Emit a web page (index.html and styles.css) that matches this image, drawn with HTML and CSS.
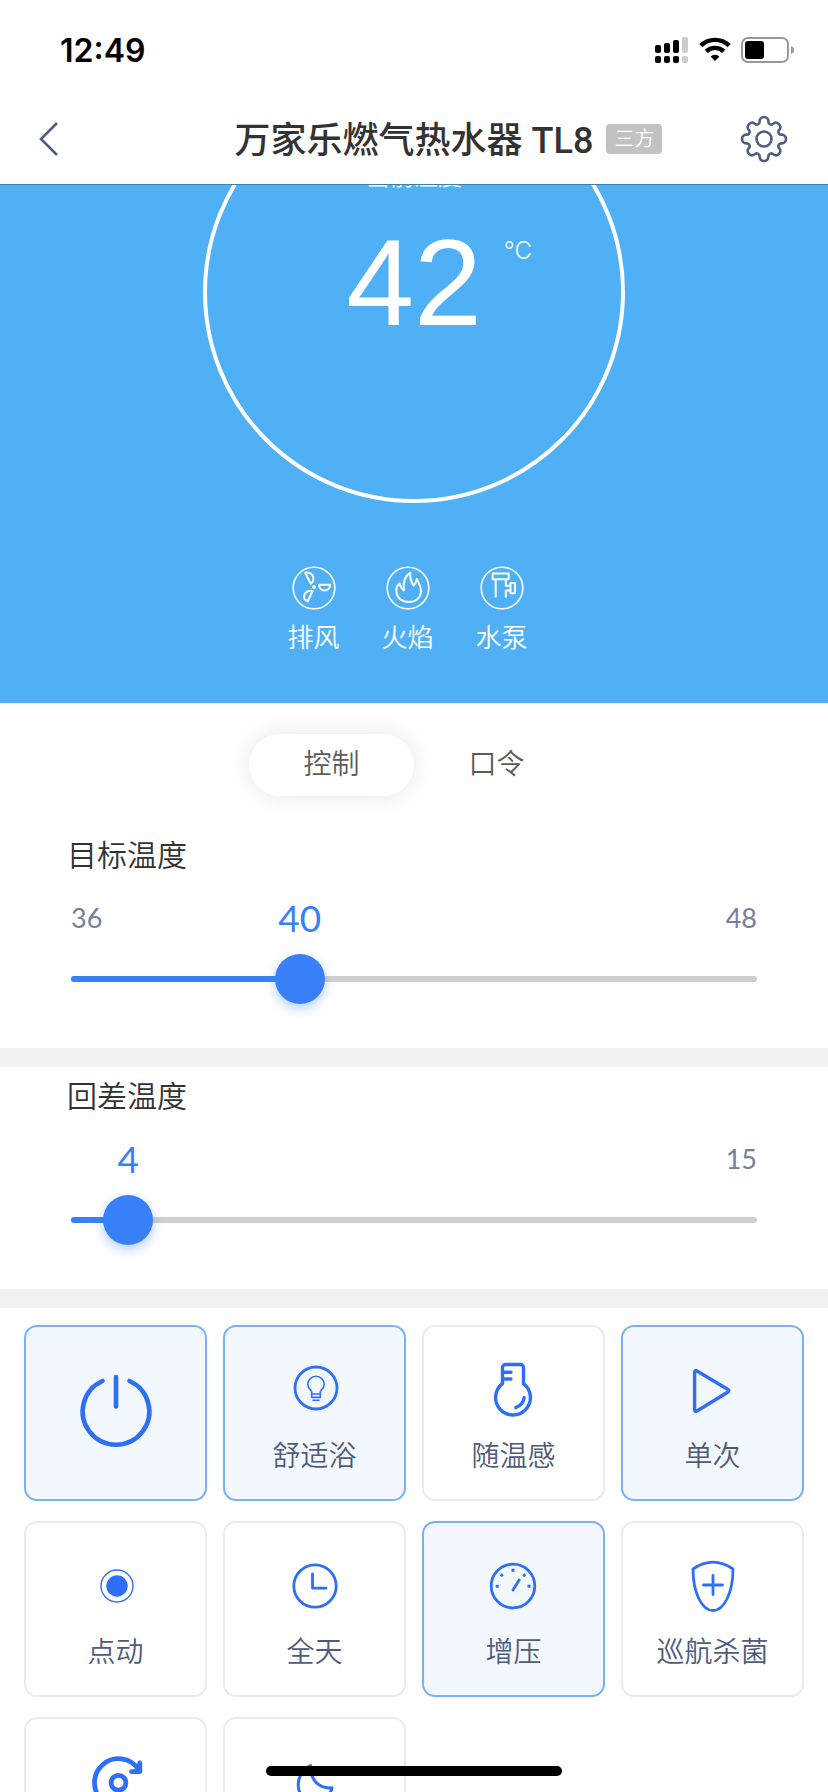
FILE: index.html
```html
<!DOCTYPE html>
<html lang="zh-CN">
<head>
  <meta charset="UTF-8">
  <meta name="viewport" content="width=device-width, initial-scale=1.0">
  <title>万家乐燃气热水器 TL8</title>
  <link rel="stylesheet" href="styles.css">
</head>
<body>
  <header class="header">
    <div class="status-bar">
      <span class="time">12:49</span>
      <div class="status-icons">
        <svg width="34" height="26" viewBox="0 0 34 26">
          <rect x="0" y="8" width="6" height="8" rx="2"/>
          <rect x="9" y="6" width="6" height="10" rx="2"/>
          <rect x="18" y="3" width="6" height="13" rx="2"/>
          <rect x="27" y="0" width="6" height="16" rx="2" fill="#ccc"/>
          <rect x="0" y="19" width="6" height="7" rx="2"/>
          <rect x="9" y="19" width="6" height="7" rx="2"/>
          <rect x="18" y="19" width="6" height="7" rx="2"/>
          <rect x="27" y="19" width="6" height="7" rx="2" fill="#ccc"/>
        </svg>
        <svg width="32" height="26" viewBox="0 0 32 26" fill="none" stroke="#000" stroke-width="4.4">
          <path d="M1.8 8.6a20.4 20.4 0 0 1 28.4 0"/>
          <path d="M7.3 14.4a12.6 12.6 0 0 1 17.4 0"/>
          <path d="M16 24l-4.4-4.6a6.6 6.6 0 0 1 8.8 0z" fill="#000" stroke="none"/>
        </svg>
        <svg width="54" height="26" viewBox="0 0 54 26">
          <rect x="1" y="1" width="46" height="24" rx="6" fill="none" stroke="#999" stroke-width="2"/>
          <rect x="4" y="4" width="19" height="18" rx="3"/>
          <path d="M50 9q3 1 3 4t-3 4z" fill="#999"/>
        </svg>
      </div>
    </div>
    <nav class="nav">
      <a href="#" class="back" aria-label="返回">
        <svg width="20" height="34" viewBox="0 0 20 34"><path d="M18 1L2 17l16 16"/></svg>
      </a>
      <h1>万家乐燃气热水器 TL8</h1>
      <div class="nav-right">
        <span class="badge">三方</span>
        <button class="settings" aria-label="设置">
          <svg width="50" height="50" viewBox="-25 -25 50 50">
            <path d="M17.6-4.4A4.4 4.4 0 0 1 17.6 4.4A2.8 2.8 0 0 0 15.5 9.4A4.4 4.4 0 0 1 9.4 15.5A2.8 2.8 0 0 0 4.4 17.6A4.4 4.4 0 0 1-4.4 17.6A2.8 2.8 0 0 0-9.4 15.5A4.4 4.4 0 0 1-15.5 9.4A2.8 2.8 0 0 0-17.6 4.4A4.4 4.4 0 0 1-17.6-4.4A2.8 2.8 0 0 0-15.5-9.4A4.4 4.4 0 0 1-9.4-15.5A2.8 2.8 0 0 0-4.4-17.6A4.4 4.4 0 0 1 4.4-17.6A2.8 2.8 0 0 0 9.4-15.5A4.4 4.4 0 0 1 15.5-9.4A2.8 2.8 0 0 0 17.6-4.4Z"/>
            <circle r="7.5"/>
          </svg>
        </button>
      </div>
    </nav>
  </header>

  <main>
    <section class="hero">
      <div class="dial">
        <div class="dial-label">当前温度</div>
        <div class="dial-value">42<span class="unit">°C</span></div>
      </div>
      <ul class="states">
        <li>
          <svg width="44" height="44" viewBox="-22 -22 44 44">
            <circle r="20.8" stroke-width="1.6"/>
            <circle cy="-1" r="2" class="solid"/>
            <path d="M5-3.3H16.3C16.3 0 13.5 2.6 10.5 2.6S5 0 5-3.3Z"/>
            <path d="M-8.8-15.2C-5-16-1.5-14-0.7-11C-0.2-8.5-1-6-3.2-4.2Z"/>
            <path d="M-1.4 3C-5 2.5-8.5 4-9.7 7C-10.6 10-9.5 12.3-6.3 13.2Z"/>
          </svg>
          <span>排风</span>
        </li>
        <li>
          <svg width="44" height="44" viewBox="-22 -22 44 44">
            <circle r="20.8" stroke-width="1.6"/>
            <path d="M2.3-15.3C-3-12-5.5-7-4 2.5C-6.5 1-7.5-1.5-8.3-4.5C-11-1.5-12-2-11.5 5C-10.5 10.5-5 14 1 14C7.5 14 12.5 10 13 4C13.3-1 11-5 8.8-9C8.5-6.5 7.3-4 5.5-2.5C3-6 1.8-10 2.3-15.3Z"/>
          </svg>
          <span>火焰</span>
        </li>
        <li>
          <svg width="44" height="44" viewBox="-22 -22 44 44">
            <circle r="20.8" stroke-width="1.6"/>
            <path d="M-9.3-14.5H6.7V-8.7H-9.3ZM-6.3-8.7V9.5M3.8-8.7V-2.3H8M3.8 9.5V2.5H8M8.5-5H13V5.3H8.5Z"/>
          </svg>
          <span>水泵</span>
        </li>
      </ul>
    </section>

    <div class="tabs">
      <button class="tab active">控制</button>
      <button class="tab">口令</button>
    </div>

    <section class="setting">
      <label for="target">目标温度</label>
      <div class="scale">
        <span>36</span>
        <output for="target" style="left: 33.33%">40</output>
        <span>48</span>
      </div>
      <div class="slider">
        <div class="track"><div class="fill" style="width: 33.33%"></div></div>
        <input type="range" id="target" min="36" max="48" value="40">
      </div>
    </section>

    <section class="setting">
      <label for="hysteresis">回差温度</label>
      <div class="scale">
        <span></span>
        <output for="hysteresis" style="left: 8.33%">4</output>
        <span>15</span>
      </div>
      <div class="slider">
        <div class="track"><div class="fill" style="width: 8.33%"></div></div>
        <input type="range" id="hysteresis" min="3" max="15" value="4">
      </div>
    </section>

    <section class="modes">
      <button class="mode power on" aria-label="电源">
        <svg viewBox="-36 -36 72 72" stroke-width="4.6">
          <path d="M-13.5-32A33.3 33.3 0 1 0 13.5-32M0-36V-6.5"/>
        </svg>
      </button>
      <button class="mode on">
        <svg viewBox="-36 -36 72 72">
          <circle cx="1" cy="-1" r="21" stroke-width="2.8"/>
          <path stroke-width="1.6" d="M-3.3 6V2.8C-3.3 1.5-7.2-0.5-7.2-4.6a8.2 8.2 0 0 1 16.4 0C9.2-0.5 5.3 1.5 5.3 2.8V8.4H-3.3V5H5.3M-2 11.2H4"/>
        </svg>
        <span>舒适浴</span>
      </button>
      <button class="mode">
        <svg viewBox="-36 -36 72 72" stroke-width="3.4">
          <path d="M-11.5-5.3V-21.5a3 3 0 0 1 3-3H6.5a3 3 0 0 1 3 3V-5.3A17.4 17.4 0 1 1-11.5-5.3ZM-11-16.7H-3M-11-10H-3M10.2 8.6Q9 16 1.8 18.6"/>
        </svg>
        <span>随温感</span>
      </button>
      <button class="mode on">
        <svg viewBox="-36 -36 72 72" stroke-width="3.4">
          <path d="M-18.4-16.6Q-18.4-19.4-16-18L14.6 0.2Q17 1.8 14.6 3.2L-16 22Q-18.4 23.4-18.4 20.6Z"/>
        </svg>
        <span>单次</span>
      </button>
      <button class="mode">
        <svg viewBox="-36 -36 72 72">
          <circle cx="1" cy="1" r="16" stroke-width="1.4"/>
          <circle cx="1" cy="1" r="10.7" class="solid"/>
        </svg>
        <span>点动</span>
      </button>
      <button class="mode">
        <svg viewBox="-36 -36 72 72" stroke-width="2.8">
          <circle cy="1" r="21.2"/>
          <path d="M-2.5-11V3.2H11"/>
        </svg>
        <span>全天</span>
      </button>
      <button class="mode on">
        <svg viewBox="-36 -36 72 72" stroke-width="2.8">
          <circle cx="-1" cy="1" r="21.8"/>
          <path d="M-1 5L5.2-5"/>
          <path class="solid" d="M-2.5-16.2h3v3h-3zM-18.3-0.2h3v3h-3zM13.5-0.2h3v3h-3zM-12.2-11.8l2 2-2 2-2-2zM10.2-11.8l2 2-2 2-2-2z"/>
        </svg>
        <span>增压</span>
      </button>
      <button class="mode">
        <svg viewBox="-36 -36 72 72" stroke-width="2.8">
          <path d="M-20-16Q-10-22.8 0-22.8T20-16C20 8 11 25.5 0 25.5S-20 8-20-16ZM-9.5 0H9.5M0-9.5V9.5"/>
        </svg>
        <span>巡航杀菌</span>
      </button>
      <button class="mode" aria-label="循环">
        <svg viewBox="-36 -36 72 72" stroke-width="4.8">
          <path d="M22.5-11.5A24 24 0 1 0 22.5 15M23.8-18V-9.3H15.5"/>
          <circle cx="2.5" cy="1.7" r="7.4"/>
        </svg>
      </button>
      <button class="mode" aria-label="夜间">
        <svg viewBox="-36 -36 72 72" stroke-width="3">
          <path d="M-4.5-15.5C-5 0 5 8 17 6.8C14 20-4 26-13 15C-20 6-17-10-4.5-15.5Z"/>
        </svg>
      </button>
    </section>
  </main>

  <div class="home-indicator"></div>

  <script>
    document.querySelectorAll('.setting').forEach(function (box) {
      const input = box.querySelector('input');
      const value = box.querySelector('output');
      const fill = box.querySelector('.fill');

      input.addEventListener('input', function () {
        const percent = (input.value - input.min) / (input.max - input.min) * 100;
        value.textContent = input.value;
        value.style.left = percent + '%';
        fill.style.width = percent + '%';
      });
    });
  </script>
</body>
</html>
```
FILE: styles.css
```css
* {
  box-sizing: border-box;
}
body {
  margin: 0;
  height: 100vh;
  display: flex;
  flex-direction: column;
  overflow: hidden;
  background: #fff;
  font-family: Roboto, "Noto Sans CJK SC", sans-serif;
  font-weight: 350;
  color: #333;
}
button {
  border: none;
  padding: 0;
  background: none;
  font-family: inherit;
  font-weight: inherit;
  cursor: pointer;
}
svg {
  display: block;
  flex: none;
  overflow: visible;
}

/* header */
.header {
  flex: none;
  border-bottom: 1px solid #3f80ab;
}
.status-bar {
  height: 96px;
  padding: 4px 33px 0 60px;
  display: flex;
  align-items: center;
  justify-content: space-between;
}
.time {
  font-family: Inter, sans-serif;
  font-size: 32px;
  font-weight: 600;
  color: #000;
}
.status-icons {
  display: flex;
  gap: 10px;
}
.nav {
  height: 88px;
  padding: 0 39px 2px;
  display: grid;
  grid-template-columns: 1fr auto 1fr;
  align-items: center;
}
.nav svg {
  fill: none;
  stroke: #4f5d80;
  stroke-width: 2.6;
}
.back {
  justify-self: start;
}
.nav h1 {
  margin: 0;
  padding-top: 4px;
  font-size: 36px;
  font-weight: 500;
  line-height: 48px;
}
.nav-right {
  display: flex;
  align-items: center;
  justify-content: space-between;
  padding-left: 13px;
}
.badge {
  padding: 0 8px;
  border-radius: 4px;
  background: #c2c2c2;
  color: #fff;
  font-size: 20px;
  line-height: 30px;
}

/* content */
main {
  flex: 1;
  overflow-y: auto;
  scrollbar-width: none;
}
.hero {
  height: 518px;
  overflow: hidden;
  background: #50b0f5;
  color: #fff;
  display: flex;
  flex-direction: column;
  align-items: center;
}
.dial {
  flex: none;
  width: 422px;
  height: 422px;
  margin-top: -104px;
  padding-top: 76px;
  border: 4px solid #fff;
  border-radius: 50%;
  text-align: center;
}
.dial-label {
  font-size: 24px;
  line-height: 32px;
}
.dial-value {
  position: relative;
  width: max-content;
  margin: 20px auto 0;
  font-family: "Liberation Sans", sans-serif;
  font-size: 122px;
  line-height: 140px;
}
.unit {
  position: absolute;
  top: 22px;
  left: 100%;
  margin-left: 22px;
  font-family: Inter, sans-serif;
  font-size: 24px;
  font-weight: 300;
  line-height: 32px;
}
.states {
  display: flex;
  margin: 63px 0 0;
  padding: 0 13px 0 0;
  list-style: none;
}
.states li {
  width: 94px;
  display: flex;
  flex-direction: column;
  align-items: center;
  gap: 8px;
  font-size: 26px;
  line-height: 40px;
}
.states svg {
  fill: none;
  stroke: #fff;
  stroke-width: 2;
  stroke-linejoin: round;
}
.states .solid {
  fill: #fff;
  stroke: none;
}

/* tabs */
.tabs {
  display: flex;
  justify-content: center;
  padding: 31px 0 30px;
}
.tab {
  width: 165px;
  height: 62px;
  border-radius: 31px;
  font-size: 28px;
  line-height: 40px;
  color: #5c5c5c;
}
.tab.active {
  background: #fff;
  box-shadow: 0 0 24px rgba(0, 0, 0, 0.1);
}

/* sliders */
.setting {
  padding: 8px 71px 44px;
  border-bottom: 19px solid #f1f1f1;
}
.setting label {
  display: block;
  margin-left: -4px;
  font-size: 30px;
  line-height: 44px;
}
.scale {
  position: relative;
  display: flex;
  justify-content: space-between;
  margin-top: 18px;
  font-family: Lato, sans-serif;
  font-size: 27px;
  font-weight: 400;
  line-height: 44px;
  color: #74809f;
}
.scale output {
  position: absolute;
  top: 0;
  transform: translateX(-50%);
  font-size: 37px;
  color: #3880f7;
}
.slider {
  display: grid;
  align-items: center;
  margin-top: 14px;
}
.track,
.slider input {
  grid-area: 1 / 1;
}
.track {
  height: 6px;
  border-radius: 3px;
  background: #d0d0d0;
  overflow: hidden;
}
.fill {
  height: 100%;
  background: #3880f7;
}
/* wider than the track so the thumb centre reaches both ends */
.slider input {
  position: relative;
  appearance: none;
  height: 50px;
  margin: 0 -25px;
  background: none;
}
.slider input::-webkit-slider-thumb {
  appearance: none;
  width: 50px;
  height: 50px;
  border-radius: 50%;
  background: #3880f7;
  box-shadow: 0 4px 12px rgba(56, 128, 247, 0.4);
}

/* mode buttons */
.modes {
  display: grid;
  grid-template-columns: repeat(4, 1fr);
  gap: 20px 16px;
  padding: 17px 24px;
}
.mode {
  min-height: 176px;
  padding-top: 26px;
  border: 2px solid #ebebeb;
  border-radius: 13px;
  background: #fff;
  display: flex;
  flex-direction: column;
  align-items: center;
  gap: 12px;
  font-size: 28px;
  line-height: 40px;
  color: #4f5b7c;
}
.mode.on {
  background: #f3f8ff;
  border-color: #78b1f8;
}
.mode.power {
  padding: 0;
  justify-content: center;
}
.mode svg {
  width: 72px;
  height: 72px;
  fill: none;
  stroke: #2f6ff8;
  stroke-linecap: round;
  stroke-linejoin: round;
}
.mode .solid {
  fill: #2f6ff8;
  stroke: none;
}

.home-indicator {
  position: fixed;
  bottom: 16px;
  left: 50%;
  width: 296px;
  height: 10px;
  margin-left: -148px;
  border-radius: 5px;
  background: #000;
}
```
